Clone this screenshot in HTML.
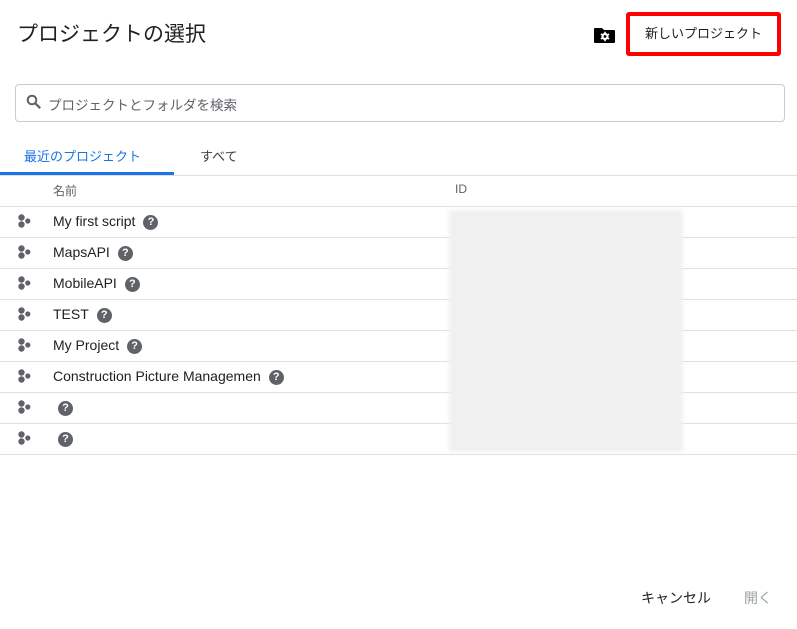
<!DOCTYPE html>
<html><head><meta charset="utf-8"><style>
*{margin:0;padding:0;box-sizing:border-box}
body{width:797px;height:629px;background:#fff;font-family:"Liberation Sans","Noto Sans CJK JP",sans-serif;position:relative;overflow:hidden;color:#202124}
.abs{position:absolute}
.title{left:17px;top:18px;font-size:21px;color:#202124}
.newbtn{left:626px;top:12px;width:155px;height:44px;border:4px solid #f00;border-radius:3px;font-size:13px;line-height:36px;text-align:center;color:#202124}
.search{left:15px;top:84px;width:770px;height:38px;border:1px solid #ccc;border-radius:4px}
.search span{position:absolute;left:32px;top:9px;font-size:13.5px;color:#5f6368}
.tab1{left:24px;top:146px;font-size:13px;color:#1a73e8}
.tab2{left:200px;top:146px;font-size:13px;color:#3c4043}
.tabline{left:0;top:172px;width:174px;height:3px;background:#1a73e8}
.hline{left:0;width:797px;height:1px;background:#e0e0e0}
.hdr{top:182px;font-size:12px;color:#5f6368}
.row{left:0;width:797px;height:31px}
.row .ic{position:absolute;left:17px;top:8px}
.row .nm{position:absolute;left:53px;top:7px;font-size:14px;color:#202124;white-space:nowrap}
.q{display:inline-block;width:15px;height:15px;border-radius:50%;background:#5f6368;color:#fff;font-size:11px;font-weight:bold;text-align:center;line-height:15px;vertical-align:1px;margin-left:8px}
.blur{left:449px;top:210px;width:234px;height:242px;background:#f0f0f0;filter:blur(2px)}
.cancel{left:641px;top:588px;font-size:14px;color:#202124}
.open{left:744px;top:588px;font-size:14px;color:#9aa0a6}
</style></head><body>
<div class="abs title">プロジェクトの選択</div>
<svg class="abs" style="left:594px;top:26px" width="22" height="18" viewBox="0 0 22 18"><path d="M1 2h7l2 2h10a1 1 0 0 1 1 1v11a1 1 0 0 1-1 1H1a1 1 0 0 1-1-1V3a1 1 0 0 1 1-1z" fill="#000"/><circle cx="11" cy="10.5" r="3.6" fill="#fff"/><g stroke="#fff" stroke-width="1.6"><path d="M11 5.8v9.4M6.9 8.1l8.2 4.8M6.9 12.9l8.2-4.8"/></g><circle cx="11" cy="10.5" r="1.4" fill="#000"/></svg>
<div class="abs newbtn">新しいプロジェクト</div>
<div class="abs search"><svg style="position:absolute;left:10px;top:9px" width="16" height="16" viewBox="0 0 16 16"><circle cx="6" cy="6" r="4.3" fill="none" stroke="#5f6368" stroke-width="2"/><path d="M9.2 9.2l5 5" stroke="#5f6368" stroke-width="2.2"/></svg><span>プロジェクトとフォルダを検索</span></div>
<div class="abs tab1">最近のプロジェクト</div>
<div class="abs tab2">すべて</div>
<div class="abs tabline"></div>
<div class="abs hline" style="top:175px"></div>
<div class="abs hdr" style="left:53px">名前</div>
<div class="abs hdr" style="left:455px">ID</div>
<div class="abs hline" style="top:206px"></div>
<div class="abs hline" style="top:237px"></div>
<div class="abs hline" style="top:268px"></div>
<div class="abs hline" style="top:299px"></div>
<div class="abs hline" style="top:330px"></div>
<div class="abs hline" style="top:361px"></div>
<div class="abs hline" style="top:392px"></div>
<div class="abs hline" style="top:423px"></div>
<div class="abs hline" style="top:454px"></div>

<div class="abs row" style="top:206px"><svg class="ic" width="16" height="16"><circle cx="4.5" cy="3.5" r="3.2" fill="#5f6368"/><circle cx="4.5" cy="10.5" r="3.2" fill="#5f6368"/><circle cx="10.8" cy="7" r="2.6" fill="#5f6368"/></svg><div class="nm">My first script<span class="q">?</span></div></div>
<div class="abs row" style="top:237px"><svg class="ic" width="16" height="16"><circle cx="4.5" cy="3.5" r="3.2" fill="#5f6368"/><circle cx="4.5" cy="10.5" r="3.2" fill="#5f6368"/><circle cx="10.8" cy="7" r="2.6" fill="#5f6368"/></svg><div class="nm">MapsAPI<span class="q">?</span></div></div>
<div class="abs row" style="top:268px"><svg class="ic" width="16" height="16"><circle cx="4.5" cy="3.5" r="3.2" fill="#5f6368"/><circle cx="4.5" cy="10.5" r="3.2" fill="#5f6368"/><circle cx="10.8" cy="7" r="2.6" fill="#5f6368"/></svg><div class="nm">MobileAPI<span class="q">?</span></div></div>
<div class="abs row" style="top:299px"><svg class="ic" width="16" height="16"><circle cx="4.5" cy="3.5" r="3.2" fill="#5f6368"/><circle cx="4.5" cy="10.5" r="3.2" fill="#5f6368"/><circle cx="10.8" cy="7" r="2.6" fill="#5f6368"/></svg><div class="nm">TEST<span class="q">?</span></div></div>
<div class="abs row" style="top:330px"><svg class="ic" width="16" height="16"><circle cx="4.5" cy="3.5" r="3.2" fill="#5f6368"/><circle cx="4.5" cy="10.5" r="3.2" fill="#5f6368"/><circle cx="10.8" cy="7" r="2.6" fill="#5f6368"/></svg><div class="nm">My Project<span class="q">?</span></div></div>
<div class="abs row" style="top:361px"><svg class="ic" width="16" height="16"><circle cx="4.5" cy="3.5" r="3.2" fill="#5f6368"/><circle cx="4.5" cy="10.5" r="3.2" fill="#5f6368"/><circle cx="10.8" cy="7" r="2.6" fill="#5f6368"/></svg><div class="nm">Construction Picture Managemen<span class="q">?</span></div></div>
<div class="abs row" style="top:392px"><svg class="ic" width="16" height="16"><circle cx="4.5" cy="3.5" r="3.2" fill="#5f6368"/><circle cx="4.5" cy="10.5" r="3.2" fill="#5f6368"/><circle cx="10.8" cy="7" r="2.6" fill="#5f6368"/></svg><div class="nm"><span class="q" style="margin-left:5px">?</span></div></div>
<div class="abs row" style="top:423px"><svg class="ic" width="16" height="16"><circle cx="4.5" cy="3.5" r="3.2" fill="#5f6368"/><circle cx="4.5" cy="10.5" r="3.2" fill="#5f6368"/><circle cx="10.8" cy="7" r="2.6" fill="#5f6368"/></svg><div class="nm"><span class="q" style="margin-left:5px">?</span></div></div>

<div class="abs blur"></div>
<div class="abs cancel">キャンセル</div>
<div class="abs open">開く</div>
</body></html>
